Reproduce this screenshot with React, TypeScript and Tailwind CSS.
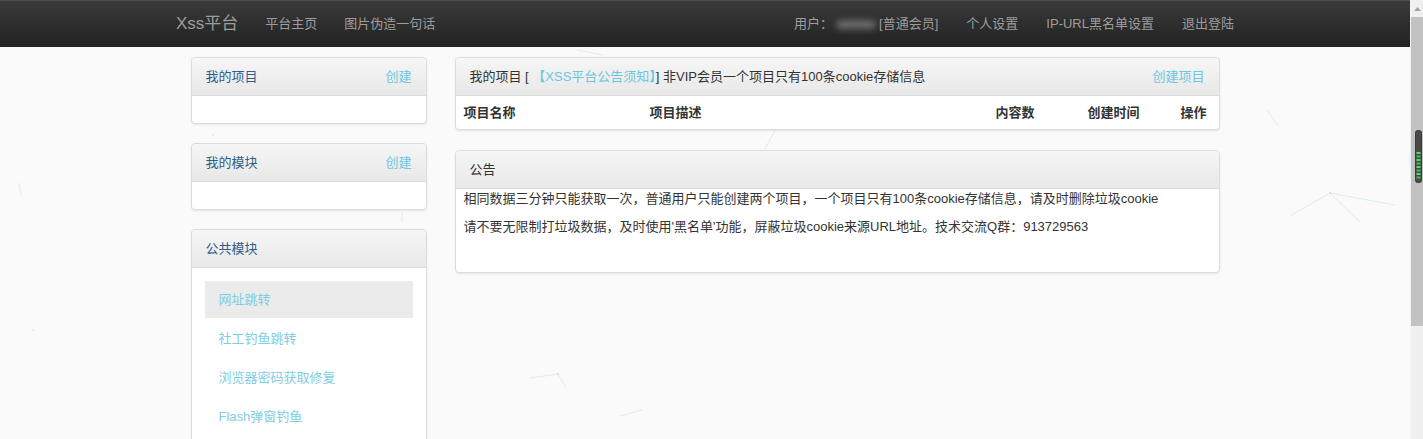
import React from 'react';

const font = "font-['Liberation_Sans','Noto_Sans_CJK_SC',sans-serif]";

const Panel = ({
  title,
  action,
  titleClass = 'text-[#2f5d8a]',
  children,
}: {
  title: React.ReactNode;
  action?: string;
  titleClass?: string;
  children?: React.ReactNode;
}) => {
  return (
    <div className="rounded-[4px] border border-[#dcdcdc] bg-white shadow-[0_1px_2px_rgba(0,0,0,0.08)]">
      <div className="flex h-[38px] items-center justify-between rounded-t-[4px] border-b border-[#dcdcdc] bg-gradient-to-b from-[#f6f6f6] to-[#e8e8e8] px-[14px] text-[13px] leading-[16px]">
        <span className={titleClass}>{title}</span>
        {action && <a className="text-[#6cc6df]">{action}</a>}
      </div>
      {children}
    </div>
  );
};

const publicModules = ['网址跳转', '社工钓鱼跳转', '浏览器密码获取修复', 'Flash弹窗钓鱼'];

const Scrollbar = () => (
  <div className="flex w-[13px] shrink-0 flex-col border-l border-[#f4f4f4] bg-[#f0f0f0]">
    {/* up arrow */}
    <div className="flex h-[17px] shrink-0 items-center justify-center">
      <svg width="7" height="4" viewBox="0 0 7 4">
        <path d="M3.5 0 L7 4 L0 4 Z" fill="#a3a3a3" />
      </svg>
    </div>
    {/* track */}
    <div className="flex h-[309px] shrink-0 flex-col bg-[#c2c2c2] pl-[4px] pt-[113px]">
      <svg width="7" height="53" viewBox="0 0 7 53">
        <rect x="0" y="0" width="7" height="53" rx="3.5" fill="#4a4a4a" />
        <rect x="0.5" y="0.5" width="6" height="52" rx="3" fill="none" stroke="#3a3a3a" />
        {[22, 25.5, 29, 32.5, 36, 39.5, 43, 46.5].map((y, i) => (
          <rect key={y} x="1.5" y={y} width="4" height="2" fill={i % 2 ? '#35c24a' : '#4fdc63'} />
        ))}
      </svg>
    </div>
  </div>
);

const BackgroundLines = () => (
  <svg className="pointer-events-none absolute inset-0 h-full w-full" viewBox="0 0 1410 439" preserveAspectRatio="none">
    <g stroke="#dcefe9" strokeWidth="1" fill="none">
      <line x1="577" y1="50" x2="603" y2="55" />
      <line x1="19" y1="183" x2="21" y2="196" />
      <line x1="765" y1="149" x2="776" y2="128" />
      <line x1="1267" y1="110" x2="1278" y2="126" />
      <line x1="1290" y1="216" x2="1330" y2="193" />
      <line x1="1330" y1="193" x2="1360" y2="222" />
      <line x1="1330" y1="193" x2="1395" y2="205" />
      <line x1="402" y1="212" x2="402" y2="222" />
      <line x1="530" y1="378" x2="558" y2="374" />
      <line x1="558" y1="374" x2="566" y2="388" />
      <line x1="620" y1="416" x2="642" y2="410" />
    </g>
    <g fill="#cfe0dc">
      <circle cx="1330" cy="193" r="1" />
      <circle cx="558" cy="374" r="1" />
      <circle cx="33" cy="330" r="0.8" />
      <circle cx="213" cy="135" r="0.8" />
    </g>
  </svg>
);

export default function App() {
  return (
    <div className={`flex h-[439px] w-full overflow-hidden bg-[#fafafa] ${font}`}>
      <div className="relative flex min-w-0 flex-1 flex-col">
        <BackgroundLines />

        {/* Top navbar */}
        <div className="relative z-10 h-[47px] shrink-0 border-t border-[#4e4e4e] bg-gradient-to-b from-[#3a3a3a] to-[#222222]">
          <div className="mx-auto flex h-full w-[1058px] items-center justify-between text-[13px] text-[#9d9d9d]">
            <div className="flex items-center gap-[27px]">
              <span className="text-[17px] leading-[20px] text-[#9d9d9d]">Xss平台</span>
              <a>平台主页</a>
              <a>图片伪造一句话</a>
            </div>
            <div className="flex items-center gap-[28px]">
              <span className="flex items-center">
                用户：
                <span className="mx-[3px] inline-block h-[9px] w-[40px] rounded-full bg-[#6a6a6a] blur-[3px]" />
                [普通会员]
              </span>
              <a>个人设置</a>
              <a>IP-URL黑名单设置</a>
              <a>退出登陆</a>
            </div>
          </div>
        </div>

        {/* Content */}
        <div className="relative z-10 flex shrink-0 justify-center gap-[28px] pt-[10px]">
          {/* Left column */}
          <div className="flex w-[236px] flex-col gap-[19px]">
            <Panel title="我的项目" action="创建">
              <div className="h-[27px]" />
            </Panel>
            <Panel title="我的模块" action="创建">
              <div className="h-[27px]" />
            </Panel>
            <Panel title="公共模块">
              <div className="flex flex-col gap-[2px] px-[13px] pb-[20px] pt-[13px]">
                {publicModules.map((m, i) => (
                  <a
                    key={m}
                    className={`flex h-[37px] items-center px-[14px] text-[13px] text-[#7fcde2] ${
                      i === 0 ? 'bg-[#ebebeb]' : ''
                    }`}
                  >
                    {m}
                  </a>
                ))}
              </div>
            </Panel>
          </div>

          {/* Right column */}
          <div className="flex w-[765px] flex-col gap-[20px]">
            <Panel
              titleClass="text-[#333]"
              action="创建项目"
              title={
                <>
                  我的项目 [ <a className="text-[#6cc6df]">【XSS平台公告须知】</a>] 非VIP会员一个项目只有100条cookie存储信息
                </>
              }
            >
              <div className="flex h-[33px] items-center pl-[8px] text-[13px] font-bold text-[#333]">
                <span className="w-[186px]">项目名称</span>
                <span className="flex-1">项目描述</span>
                <span className="w-[92px]">内容数</span>
                <span className="w-[93px]">创建时间</span>
                <span className="w-[38px]">操作</span>
              </div>
            </Panel>

            <Panel title="公告" titleClass="text-[#333]">
              <div className="h-[83px] px-[8px] pt-[2px] text-[13px] leading-[16px] text-[#333]">
                <p className="mb-[12px]">
                  相同数据三分钟只能获取一次，普通用户只能创建两个项目，一个项目只有100条cookie存储信息，请及时删除垃圾cookie
                </p>
                <p>请不要无限制打垃圾数据，及时使用'黑名单'功能，屏蔽垃圾cookie来源URL地址。技术交流Q群：913729563</p>
              </div>
            </Panel>
          </div>
        </div>
      </div>
      <Scrollbar />
    </div>
  );
}
